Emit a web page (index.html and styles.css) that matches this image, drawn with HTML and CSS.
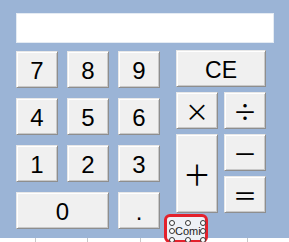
FILE: index.html
```html
<!DOCTYPE html>
<html>
  <head>
    <title>Calculator</title>
    <link rel="stylesheet" href="styles.css">
  </head>
  <body>
    <div class="calc">
      <div class="display"></div>
      <div class="keys">
        <div class="num-pad">
          <button class="key">7</button>
          <button class="key">8</button>
          <button class="key">9</button>
          <button class="key">4</button>
          <button class="key">5</button>
          <button class="key">6</button>
          <button class="key">1</button>
          <button class="key">2</button>
          <button class="key">3</button>
          <button class="key key-zero">0</button>
          <button class="key key-dot">.</button>
        </div>
        <div class="op-pad">
          <button class="key key-ce">CE</button>
          <button class="key op">×</button>
          <button class="key op op-div">÷</button>
          <button class="key op key-plus">＋</button>
          <button class="key op">－</button>
          <button class="key op">＝</button>
        </div>
      </div>
    </div>
    <div class="grid-strip">
      <span class="cell c1"></span>
      <span class="cell c2"></span>
      <span class="cell c3"></span>
      <span class="cell c4"></span>
      <span class="cell c5"></span>
    </div>

    <!-- design-time selection over the little command button -->
    <div class="selected">
      <div class="sel-frame">
        <span class="cmd-text">Comi</span>
        <span class="handle h-tl"></span>
        <span class="handle h-tm"></span>
        <span class="handle h-tr"></span>
        <span class="handle h-ml"></span>
        <span class="handle h-mr"></span>
        <span class="handle h-bl"></span>
        <span class="handle h-bm"></span>
        <span class="handle h-br"></span>
      </div>
    </div>
  </body>
</html>
```

FILE: styles.css
```css
body {
    margin: 0;
    width: 289px;
    height: 242px;
    overflow: hidden;
    background-color: #9bb4d6;
    font-family: "Liberation Sans", Arial, sans-serif;
    position: relative;
}
.calc {
    height: 238px;
    box-sizing: border-box;
    padding: 13px 15px 0 16px;
}
.display {
    height: 30px;
    background-color: #fff;
    border: 1px solid #e4ebf3;
    box-sizing: border-box;
}
.keys {
    display: flex;
    margin-top: 7px;
}
.num-pad {
    display: grid;
    grid-template-columns: 42px 42px 42px;
    grid-auto-rows: 37px;
    column-gap: 9px;
    row-gap: 10px;
    margin-top: 1px;
}
.op-pad {
    display: grid;
    grid-template-columns: 42px 42px;
    grid-auto-rows: 37px;
    column-gap: 6px;
    row-gap: 5px;
    margin-left: 16px;
}
.key {
    margin: 0;
    padding: 3px 0 0 0;
    background-color: #f0f0f0;
    border: 1px solid;
    border-color: #e8e8e8 #8e8e8e #8e8e8e #e8e8e8;
    box-shadow: inset 1px 1px 0 #fff, inset -1px -1px 0 #c9c9c9;
    font-family: "Liberation Sans", Arial, sans-serif;
    font-size: 24px;
    color: #000;
    line-height: 1;
}
.key-zero {
    grid-column: span 2;
}
.key-ce {
    grid-column: span 2;
    font-size: 23px;
}
.op {
    font-family: "Noto Sans CJK JP", sans-serif;
    font-size: 24px;
    padding-top: 0;
}
.key-plus {
    grid-row: span 2;
    font-size: 28px;
}
.grid-strip {
    height: 4px;
    background-color: #fff;
    position: relative;
}
.cell {
    position: absolute;
    top: 0;
    width: 1px;
    height: 4px;
    background-color: #c8c8c8;
}
.c1 { left: 35px; }
.c2 { left: 87px; }
.c3 { left: 140px; }
.c4 { left: 193px; }
.c5 { left: 247px; }

.selected {
    position: absolute;
    left: 164px;
    top: 214px;
    width: 44px;
    height: 29px;
    box-sizing: border-box;
    border: 3px solid #e3212c;
    border-radius: 6px;
    background-color: #eef1f6;
}
.sel-frame {
    position: absolute;
    left: 5px;
    top: 6px;
    width: 31px;
    height: 17px;
}
.handle {
    position: absolute;
    width: 4px;
    height: 4px;
    border: 1px solid #333;
    border-radius: 50%;
    background-color: #fff;
}
.h-tl { left: -3px; top: -3px; }
.h-tm { left: 13px; top: -3px; }
.h-tr { left: 28px; top: -3px; }
.h-ml { left: -3px; top: 5px; }
.h-mr { left: 28px; top: 5px; }
.h-bl { left: -3px; top: 14px; }
.h-bm { left: 13px; top: 14px; }
.h-br { left: 28px; top: 14px; }
.cmd-text {
    position: absolute;
    left: 3px;
    top: 2px;
    width: 26px;
    overflow: hidden;
    white-space: nowrap;
    font-size: 11px;
    line-height: 12px;
    color: #222;
}
```
